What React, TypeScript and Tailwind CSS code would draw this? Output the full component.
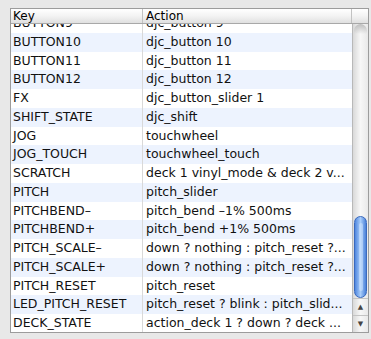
const rows: [string, string][] = [
  ["BUTTON9", "djc_button 9"],
  ["BUTTON10", "djc_button 10"],
  ["BUTTON11", "djc_button 11"],
  ["BUTTON12", "djc_button 12"],
  ["FX", "djc_button_slider 1"],
  ["SHIFT_STATE", "djc_shift"],
  ["JOG", "touchwheel"],
  ["JOG_TOUCH", "touchwheel_touch"],
  ["SCRATCH", "deck 1 vinyl_mode & deck 2 v..."],
  ["PITCH", "pitch_slider"],
  ["PITCHBEND–", "pitch_bend –1% 500ms"],
  ["PITCHBEND+", "pitch_bend +1% 500ms"],
  ["PITCH_SCALE–", "down ? nothing : pitch_reset ?..."],
  ["PITCH_SCALE+", "down ? nothing : pitch_reset ?..."],
  ["PITCH_RESET", "pitch_reset"],
  ["LED_PITCH_RESET", "pitch_reset ? blink : pitch_slid..."],
  ["DECK_STATE", "action_deck 1 ? down ? deck ..."],
];

function Scrollbar() {
  return (
    <div className="w-[16px] flex flex-col border-l border-[#b8b8b8] bg-gradient-to-r from-[#d9d9d9] via-[#f7f7f7] to-[#e9e9e9]">
      {/* top cap */}
      <div className="h-[10px] mx-[1px] rounded-t-full bg-gradient-to-b from-[#bdbdbd] to-transparent" />
      <div className="h-[182px]" />
      {/* thumb */}
      <div className="h-[82px] mx-[1px] rounded-full border border-[#3a69bd] bg-gradient-to-r from-[#4f86de] via-[#a9cdfa] to-[#4a80d8] flex justify-center">
        <div className="w-[4px] my-[6px] rounded-full bg-[#d6e7fd]/50" />
      </div>
      <div className="flex-1" />
      <div className="h-[17px] border-t border-[#c4c4c4] flex items-center justify-center text-[7px] leading-none text-[#444]">
        ▲
      </div>
      <div className="h-[17px] border-t border-[#c4c4c4] flex items-center justify-center text-[7px] leading-none text-[#444]">
        ▼
      </div>
    </div>
  );
}

export default function App() {
  return (
    <div
      className="w-[371px] h-[339px] bg-[#e8e8e8] pl-[10px] pt-[8px] overflow-hidden"
      style={{ fontFamily: '"DejaVu Sans", "Liberation Sans", sans-serif' }}
    >
      <div className="w-[359px] h-[325px] border border-[#9c9c9c] bg-white flex flex-col">
        {/* Header */}
        <div className="h-[15px] flex border-b border-[#a8a8a8] bg-gradient-to-b from-white via-[#f3f3f3] to-[#e0e0e0] text-[12px] leading-[15px] text-black">
          <div className="w-[132px] pl-[2px] border-r border-[#c2c2c2]">Key</div>
          <div className="flex-1 pl-[3px] border-r border-[#c2c2c2]">Action</div>
          <div className="w-[16px]" />
        </div>
        {/* Body */}
        <div className="flex-1 flex min-h-0">
          <div className="flex-1 overflow-hidden">
            <div className="-mt-[10px]">
              {rows.map(([key, action], i) => (
                <div
                  key={key + i}
                  className={`h-[18.75px] flex items-center text-[12.5px] text-[#111] whitespace-nowrap ${
                    i % 2 === 1 ? "bg-[#edf3fe]" : "bg-white"
                  }`}
                >
                  <div className="w-[132px] h-full flex items-center pl-[2px] border-r border-[#d9d9d9] overflow-hidden">
                    {key}
                  </div>
                  <div className="flex-1 pl-[3px] overflow-hidden">{action}</div>
                </div>
              ))}
            </div>
          </div>
          <Scrollbar />
        </div>
      </div>
    </div>
  );
}
